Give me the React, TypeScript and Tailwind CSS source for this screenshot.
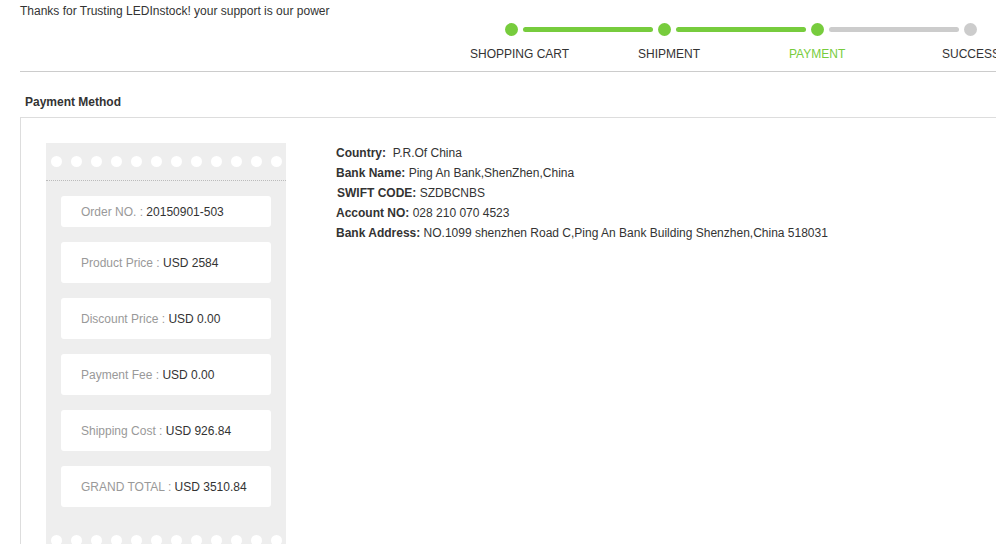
const steps = [
  { label: "SHOPPING CART", width: "w-[168px]", done: true },
  { label: "SHIPMENT", width: "w-[151px]", done: true },
  { label: "PAYMENT", width: "w-[153px]", done: true, current: true },
  { label: "SUCCESS", width: "w-[120px]", done: false },
];

const rows = [
  { label: "Order NO. :", value: "20150901-503", h: "h-[31px]" },
  { label: "Product Price :", value: "USD 2584", h: "h-[41px]" },
  { label: "Discount Price :", value: "USD 0.00", h: "h-[41px]" },
  { label: "Payment Fee :", value: "USD 0.00", h: "h-[41px]" },
  { label: "Shipping Cost :", value: "USD 926.84", h: "h-[41px]" },
  { label: "GRAND TOTAL :", value: "USD 3510.84", h: "h-[41px]" },
];

function Holes() {
  return (
    <div className="flex gap-[9px] pl-[5px]">
      {Array.from({ length: 12 }).map((_, i) => (
        <span key={i} className="block w-[11px] h-[11px] rounded-full bg-white" />
      ))}
    </div>
  );
}

function Stepper() {
  return (
    <div className="ml-[485px]">
      {/* dots + bars */}
      <div className="flex items-center mt-[4px]">
        {steps.map((s, i) => (
          <div key={s.label} className="flex items-center">
            <span
              className={`block w-[13px] h-[13px] rounded-full ${s.done ? "bg-[#77cc3d]" : "bg-[#cccccc]"}`}
            />
            {i < steps.length - 1 && (
              <span
                className={`block mx-[5px] w-[130px] h-[5px] rounded-full ${steps[i + 1].done ? "bg-[#77cc3d]" : "bg-[#cccccc]"}`}
              />
            )}
          </div>
        ))}
      </div>
      {/* labels */}
      <div className="flex ml-[-35px] mt-[10px] leading-[16px] whitespace-nowrap">
        {steps.map((s) => (
          <div key={s.label} className={`${s.width} shrink-0 ${s.current ? "text-[#77cc3d]" : "text-[#333]"}`}>
            {s.label}
          </div>
        ))}
      </div>
    </div>
  );
}

export default function App() {
  return (
    <div className="w-[996px] h-[544px] overflow-hidden bg-white text-[12px] text-[#333] font-['Arial','Liberation_Sans',sans-serif]">
      {/* header */}
      <div className="ml-[20px] w-[1000px] h-[72px] border-b border-[#cccccc]">
        <div className="pt-[3px] leading-[16px]">Thanks for Trusting LEDInstock! your support is our power</div>
        <Stepper />
      </div>

      <div className="ml-[25px] mt-[22px] leading-[16px] font-bold">Payment Method</div>

      {/* payment box */}
      <div className="ml-[20px] mt-[7px] w-[1000px] border-l border-t border-[#dddddd] p-[25px] flex items-start">
        {/* ticket */}
        <div className="w-[240px] shrink-0 bg-[#eeeeee] pt-[13px] pb-[13px]">
          <Holes />
          <div className="mt-[13px] border-b border-dotted border-[#bbbbbb]" />
          <div className="flex flex-col gap-[15px] mx-[15px] mt-[15px]">
            {rows.map((r) => (
              <div key={r.label} className={`${r.h} bg-white rounded-[3px] pl-[20px] flex items-center`}>
                <span>
                  <span className="text-[#999]">{r.label} </span>
                  <span className="text-[#333]">{r.value}</span>
                </span>
              </div>
            ))}
          </div>
          <div className="mt-[28px]">
            <Holes />
          </div>
        </div>

        {/* bank info */}
        <div className="ml-[50px] leading-[20px] whitespace-nowrap">
          <div>
            <b>Country:</b>&nbsp; P.R.Of China
          </div>
          <div>
            <b>Bank Name:</b> Ping An Bank,ShenZhen,China
          </div>
          <div className="pl-[1px]">
            <b>SWIFT CODE:</b> SZDBCNBS
          </div>
          <div>
            <b>Account NO:</b> 028 210 070 4523
          </div>
          <div>
            <b>Bank Address:</b> NO.1099 shenzhen Road C,Ping An Bank Building Shenzhen,China 518031
          </div>
        </div>
      </div>
    </div>
  );
}
